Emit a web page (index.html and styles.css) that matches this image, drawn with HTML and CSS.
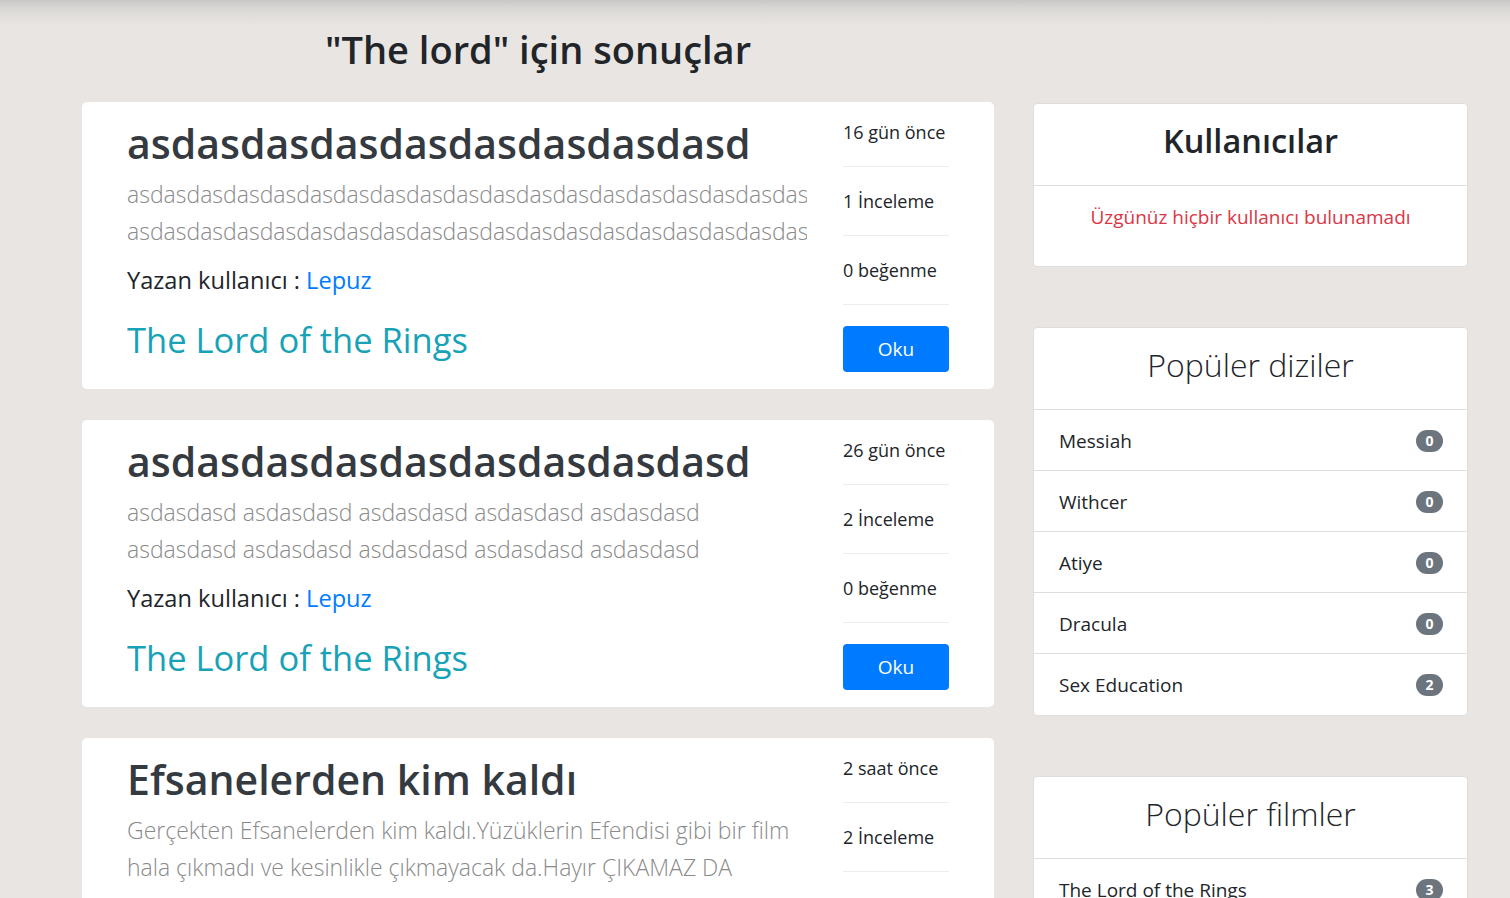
FILE: index.html
```html
<!DOCTYPE html>
<html lang="tr">
<head>
<meta charset="utf-8">
<title>Arama sonuçları</title>
<link rel="stylesheet" href="styles.css">
</head>
<body>
<div class="page">
  <main class="main">
    <h1 class="heading">"The lord" için sonuçlar</h1>

    <article class="post">
      <div class="post-body">
        <h2 class="post-title">asdasdasdasdasdasdasdasdasd</h2>
        <p class="post-text">asdasdasdasdasdasdasdasdasdasdasdasdasdasdasdasdasdasdasdasdasdasdasdasd asdasdasdasdasdasdasdasdasdasdasdasdasdasdasdasdasdasdasdasdasdasdasdasdasd</p>
        <p class="post-author">Yazan kullanıcı : <a href="#" class="link">Lepuz</a></p>
        <a href="#" class="post-film">The Lord of the Rings</a>
      </div>
      <div class="post-meta">
        <div class="meta-item">16 gün önce</div>
        <div class="meta-item">1 İnceleme</div>
        <div class="meta-item">0 beğenme</div>
        <a href="#" class="btn">Oku</a>
      </div>
    </article>

    <article class="post">
      <div class="post-body">
        <h2 class="post-title">asdasdasdasdasdasdasdasdasd</h2>
        <p class="post-text">asdasdasd asdasdasd asdasdasd asdasdasd asdasdasd asdasdasd asdasdasd asdasdasd asdasdasd asdasdasd</p>
        <p class="post-author">Yazan kullanıcı : <a href="#" class="link">Lepuz</a></p>
        <a href="#" class="post-film">The Lord of the Rings</a>
      </div>
      <div class="post-meta">
        <div class="meta-item">26 gün önce</div>
        <div class="meta-item">2 İnceleme</div>
        <div class="meta-item">0 beğenme</div>
        <a href="#" class="btn">Oku</a>
      </div>
    </article>

    <article class="post">
      <div class="post-body">
        <h2 class="post-title">Efsanelerden kim kaldı</h2>
        <p class="post-text">Gerçekten Efsanelerden kim kaldı.Yüzüklerin Efendisi gibi bir film hala çıkmadı ve kesinlikle çıkmayacak da.Hayır ÇIKAMAZ DA</p>
        <p class="post-author">Yazan kullanıcı : <a href="#" class="link">Lepuz</a></p>
        <a href="#" class="post-film">The Lord of the Rings</a>
      </div>
      <div class="post-meta">
        <div class="meta-item">2 saat önce</div>
        <div class="meta-item">2 İnceleme</div>
        <div class="meta-item">0 beğenme</div>
        <a href="#" class="btn">Oku</a>
      </div>
    </article>
  </main>

  <aside class="side">
    <section class="box">
      <h3 class="box-title bold">Kullanıcılar</h3>
      <p class="box-empty">Üzgünüz hiçbir kullanıcı bulunamadı</p>
    </section>

    <section class="box">
      <h3 class="box-title">Popüler diziler</h3>
      <ul class="list">
        <li class="list-item">Messiah <span class="badge">0</span></li>
        <li class="list-item">Withcer <span class="badge">0</span></li>
        <li class="list-item">Atiye <span class="badge">0</span></li>
        <li class="list-item">Dracula <span class="badge">0</span></li>
        <li class="list-item">Sex Education <span class="badge">2</span></li>
      </ul>
    </section>

    <section class="box">
      <h3 class="box-title">Popüler filmler</h3>
      <ul class="list">
        <li class="list-item">The Lord of the Rings <span class="badge">3</span></li>
        <li class="list-item">Joker <span class="badge">1</span></li>
      </ul>
    </section>
  </aside>
</div>
</body>
</html>
```

FILE: styles.css
```css
* { box-sizing: border-box; }

html, body { margin: 0; padding: 0; }

body {
  font-family: "Open Sans", "Noto Sans", "Liberation Sans", sans-serif;
  color: #212529;
  background: linear-gradient(to bottom, #c8c7c5 0, #dcdad7 10px, #e8e5e2 26px, #e8e5e2 100%);
  background-color: #e8e5e2;
  min-height: 898px;
}

.page {
  display: flex;
  align-items: flex-start;
  gap: 39px;
  padding-left: 82px;
}

.main {
  width: 912px;
  flex: none;
}

.heading {
  margin: 0;
  padding-top: 25px;
  height: 102px;
  text-align: center;
  font-size: 38px;
  line-height: 48px;
  font-weight: 600;
  color: #212529;
}

.post {
  display: flex;
  background: #fff;
  border-radius: 5px;
  padding: 16px 45px 17px 45px;
  margin-bottom: 31px;
}

.post-body {
  flex: 1;
  min-width: 0;
  overflow: hidden;
  padding-top: 1px;
}

.post-title {
  margin: 0;
  font-size: 41px;
  line-height: 48px;
  font-weight: 600;
  color: #343a40;
  white-space: nowrap;
}

.post-text {
  margin: 9px 0 0 0;
  font-size: 23px;
  line-height: 37px;
  font-weight: 300;
  color: #8a8a8a;
  overflow: hidden;
}

.post-author {
  margin: 12px 0 0 0;
  font-size: 23.6px;
  line-height: 36px;
  color: #212529;
}

.link {
  color: #007bff;
  text-decoration: none;
}

.post-film {
  display: block;
  margin-top: 20px;
  font-size: 34.5px;
  line-height: 43px;
  font-weight: 500;
  color: #17a2b8;
  text-decoration: none;
}

.post-meta {
  width: 106px;
  flex: none;
  margin-left: 36px;
  display: flex;
  flex-direction: column;
}

.meta-item {
  font-size: 18px;
  line-height: 27px;
  padding: 21px 0 20px 0;
  border-bottom: 1px solid #ebebf2;
  white-space: nowrap;
}

.meta-item:first-child { padding-top: 1px; }

.btn {
  display: block;
  margin-top: 21px;
  height: 46px;
  line-height: 46px;
  text-align: center;
  background: #007bff;
  color: #fff;
  font-size: 19px;
  border-radius: 4px;
  text-decoration: none;
}

.side {
  width: 435px;
  flex: none;
  padding-top: 103px;
}

.box {
  background: #fff;
  border: 1px solid #dedede;
  border-radius: 4px;
  margin-bottom: 60px;
}

.box-title {
  margin: 0;
  padding: 15px 10px 22px;
  text-align: center;
  font-size: 32px;
  line-height: 44px;
  font-weight: 300;
  color: #212529;
  border-bottom: 1px solid #dedede;
}

.box-title.bold { font-weight: 600; font-size: 32.5px; }

.box-empty {
  margin: 0;
  padding: 16px 10px 34px;
  text-align: center;
  font-size: 19px;
  line-height: 30px;
  color: #dc3545;
}

.list {
  list-style: none;
  margin: 0;
  padding: 0;
}

.list-item {
  display: flex;
  justify-content: space-between;
  align-items: center;
  padding: 16px 24px 14px 25px;
  font-size: 19px;
  line-height: 30px;
  color: #212529;
  border-bottom: 1px solid #dedede;
}

.list-item:last-child { border-bottom: 0; padding-bottom: 15px; }

.badge {
  display: inline-block;
  min-width: 27px;
  height: 22px;
  padding: 0 8px;
  border-radius: 11px;
  background: #6c757d;
  color: #fff;
  font-size: 14px;
  line-height: 22px;
  font-weight: 700;
  text-align: center;
}
```
